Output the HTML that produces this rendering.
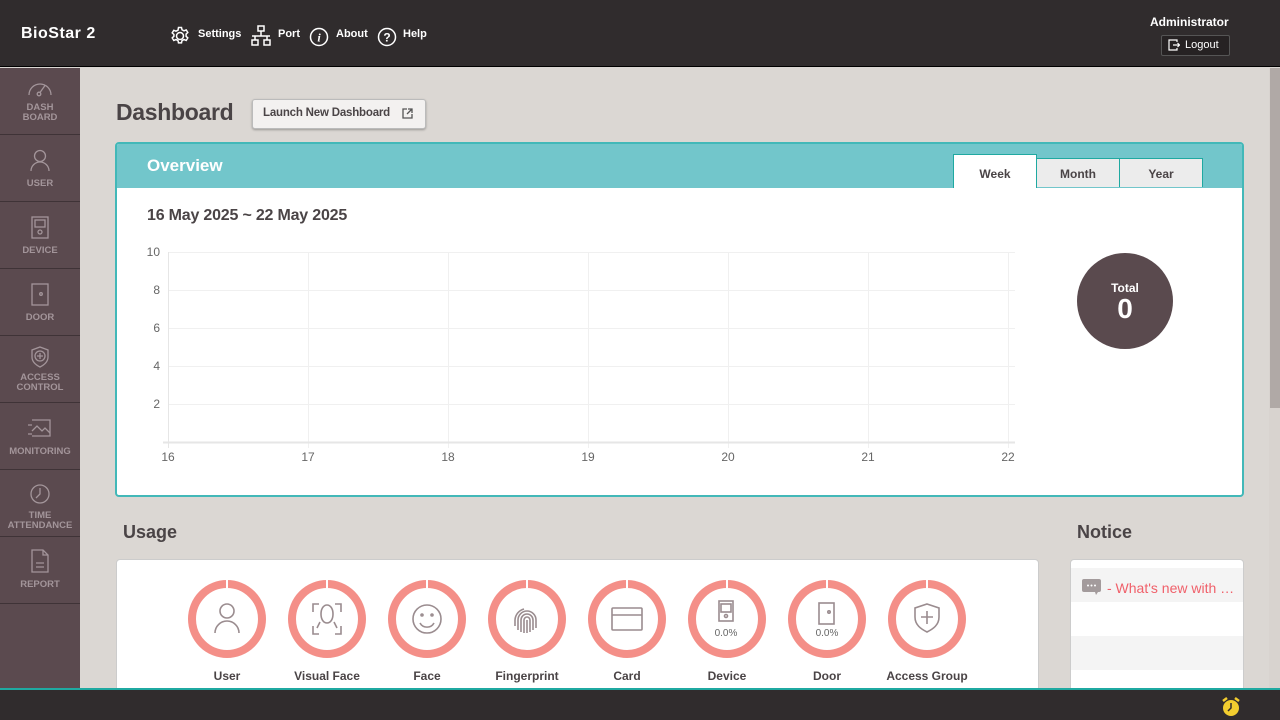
<!DOCTYPE html>
<html><head><meta charset="utf-8"><style>
*{margin:0;padding:0;box-sizing:border-box}
body{width:1280px;height:720px;overflow:hidden;background:#dbd7d3;font-family:"Liberation Sans",sans-serif;position:relative}
.a{position:absolute}
.hdr{left:0;top:0;width:1280px;height:67px;background:#302c2d;border-bottom:1px solid #000}
.nav{color:#fff;font-size:11px;font-weight:bold}
.side{left:0;top:68px;width:80px;height:622px;background:#5b4a4f}
.si{position:absolute;left:0;width:80px;border-bottom:1px solid #3f3337;text-align:center;color:#a3959a;font-size:9.5px;font-weight:bold;line-height:10px}
.si svg{display:block;margin:0 auto}
.ylab{color:#666;font-size:12px;text-align:right;width:30px}
.xlab{color:#666;font-size:12px;width:30px;text-align:center}
.lbl{position:absolute;top:669px;width:120px;text-align:center;font-size:12px;font-weight:bold;color:#4a4446}
</style></head><body>
<div class="a hdr"></div>
<div class="a" style="left:21px;top:25px;color:#fff;font-size:16px;font-weight:bold;letter-spacing:.5px">BioStar 2</div>
<svg class="a" style="left:170px;top:26px" width="20" height="20" viewBox="0 0 20 20" fill="none" stroke="#fff" stroke-width="1.5"><circle cx="10" cy="10" r="3.5"/><path d="M8.5 1.5h3l.5 2.3 2 1 2.2-.9 1.6 2.6-1.7 1.6v2.2l1.7 1.6-1.6 2.6-2.2-.9-2 1-.5 2.3h-3l-.5-2.3-2-1-2.2.9-1.6-2.6 1.7-1.6V8.5L2.2 6.9l1.6-2.6 2.2.9 2-1z"/></svg>
<div class="a nav" style="left:198px;top:28px">Settings</div>
<svg class="a" style="left:251px;top:25px" width="20" height="22" viewBox="0 0 20 22" fill="none" stroke="#fff" stroke-width="1.5"><rect x="7" y="1" width="6" height="5"/><rect x="1" y="15" width="6" height="5"/><rect x="13" y="15" width="6" height="5"/><path d="M10 6v5M1 11h18M4 11v4M16 11v4"/></svg>
<div class="a nav" style="left:278px;top:28px">Port</div>
<svg class="a" style="left:309px;top:27px" width="20" height="20" viewBox="0 0 20 20" fill="none" stroke="#fff" stroke-width="1.5"><circle cx="10" cy="10" r="8.5"/><text x="10" y="14.5" fill="#fff" stroke="none" font-size="12" font-style="italic" font-weight="bold" text-anchor="middle" font-family="Liberation Serif">i</text></svg>
<div class="a nav" style="left:336px;top:28px">About</div>
<svg class="a" style="left:377px;top:27px" width="20" height="20" viewBox="0 0 20 20" fill="none" stroke="#fff" stroke-width="1.5"><circle cx="10" cy="10" r="8.5"/><text x="10" y="14.5" fill="#fff" stroke="none" font-size="12" font-weight="bold" text-anchor="middle">?</text></svg>
<div class="a nav" style="left:403px;top:28px">Help</div>
<div class="a" style="left:1150px;top:15px;color:#fff;font-size:12px;font-weight:bold">Administrator</div>
<div class="a" style="left:1161px;top:35px;width:69px;height:21px;border:1px solid #555;background:#262223;border-radius:2px"></div>
<svg class="a" style="left:1168px;top:39px" width="12" height="12" viewBox="0 0 12 12" fill="none" stroke="#fff" stroke-width="1.2"><path d="M9 3V1H1v10h8V9M5 6h6.5M9.5 4l2 2-2 2"/></svg>
<div class="a" style="left:1185px;top:39px;color:#fff;font-size:11px">Logout</div>

<div class="a side"></div>
<div class="si" style="top:68px;height:67px;padding-top:12px"><svg width="28" height="18" viewBox="0 0 28 18" fill="none" stroke="#a3959a" stroke-width="1.3"><path d="M3 15A11 11 0 0 1 25 15"/><circle cx="13" cy="14" r="1.8"/><path d="M14 12.5l5-7"/></svg><div style="margin-top:5px">DASH<br>BOARD</div></div>
<div class="si" style="top:135px;height:67px;padding-top:14px"><svg width="22" height="24" viewBox="0 0 22 24" fill="none" stroke="#a3959a" stroke-width="1.3"><circle cx="11" cy="7" r="5.5"/><path d="M2 22a9 9 0 0 1 18 0"/></svg><div style="margin-top:6px">USER</div></div>
<div class="si" style="top:202px;height:67px;padding-top:14px"><svg width="22" height="24" viewBox="0 0 22 24" fill="none" stroke="#a3959a" stroke-width="1.3"><rect x="3" y="1" width="16" height="21"/><rect x="6" y="4" width="10" height="7"/><circle cx="11" cy="16" r="2"/></svg><div style="margin-top:6px">DEVICE</div></div>
<div class="si" style="top:269px;height:67px;padding-top:14px"><svg width="22" height="24" viewBox="0 0 22 24" fill="none" stroke="#a3959a" stroke-width="1.3"><rect x="3" y="1" width="16" height="21"/><circle cx="12" cy="11" r="1.3"/></svg><div style="margin-top:6px">DOOR</div></div>
<div class="si" style="top:336px;height:67px;padding-top:9px"><svg width="22" height="24" viewBox="0 0 22 24" fill="none" stroke="#a3959a" stroke-width="1.3"><path d="M11 2l8 3v7c0 5-4 8-8 10-4-2-8-5-8-10V5z"/><circle cx="11" cy="11" r="5"/><path d="M11 8v6M8 11h6"/></svg><div style="margin-top:4px">ACCESS<br>CONTROL</div></div>
<div class="si" style="top:403px;height:67px;padding-top:14px"><svg width="26" height="24" viewBox="0 0 26 24" fill="none" stroke="#a3959a" stroke-width="1.3"><path d="M5 3h18v16H5M1 8h4M1 17h4"/><path d="M5 14l5-5 5 5 3-3 5 5"/></svg><div style="margin-top:6px">MONITORING</div></div>
<div class="si" style="top:470px;height:67px;padding-top:13px"><svg width="22" height="24" viewBox="0 0 22 24" fill="none" stroke="#a3959a" stroke-width="1.3"><circle cx="11" cy="11" r="9"/><path d="M11 5v6l-4 4"/></svg><div style="margin-top:4px">TIME<br>ATTENDANCE</div></div>
<div class="si" style="top:537px;height:67px;padding-top:12px"><svg width="22" height="24" viewBox="0 0 22 24" fill="none" stroke="#a3959a" stroke-width="1.3"><path d="M3 1h11l5 5v17H3z"/><path d="M14 1v5h5M7 14h8M7 18h8"/></svg><div style="margin-top:7px">REPORT</div></div>

<div class="a" style="left:1269px;top:68px;width:11px;height:622px;background:#d8d3cf"></div>
<div class="a" style="left:1270px;top:68px;width:10px;height:340px;background:#b0a9a6"></div>

<div class="a" style="left:116px;top:99px;font-size:23px;font-weight:bold;color:#4a4446;letter-spacing:-.3px">Dashboard</div>
<div class="a" style="left:252px;top:99px;width:174px;height:30px;background:#f3f1f0;border:1px solid #bbb;border-radius:3px;box-shadow:0 1px 2px rgba(0,0,0,.3)"></div>
<div class="a" style="left:263px;top:107px;font-size:11.5px;font-weight:bold;color:#4a4446;letter-spacing:-.2px">Launch New Dashboard</div>
<svg class="a" style="left:402px;top:108px" width="11" height="11" viewBox="0 0 11 11" fill="none" stroke="#555" stroke-width="1.3"><path d="M5 1H1v9h9V6M6 1h4v4M10 1L5 6"/></svg>

<div class="a" style="left:115px;top:142px;width:1129px;height:355px;background:#fff;border:2px solid #42b8b8;border-radius:4px;overflow:hidden">
<div style="height:44px;background:#72c6cb"></div></div>
<div class="a" style="left:147px;top:156px;color:#fff;font-size:17px;font-weight:bold">Overview</div>
<div class="a" style="left:953px;top:154px;width:84px;height:34px;background:#fff;border:1px solid #1fa9a1;border-bottom:none;font-size:12px;font-weight:bold;color:#4a4446;text-align:center;line-height:38px">Week</div>
<div class="a" style="left:1037px;top:158px;width:83px;height:29px;background:#ececec;border:1px solid #1fa9a1;border-left:none;border-bottom:none;font-size:12px;font-weight:bold;color:#4a4446;text-align:center;line-height:30px">Month</div>
<div class="a" style="left:1119px;top:158px;width:84px;height:29px;background:#ececec;border:1px solid #1fa9a1;border-bottom:none;font-size:12px;font-weight:bold;color:#4a4446;text-align:center;line-height:30px">Year</div>
<div class="a" style="left:147px;top:207px;font-size:16px;font-weight:bold;color:#4a4446;letter-spacing:-.2px">16 May 2025 ~ 22 May 2025</div>

<svg class="a" style="left:0;top:0" width="1280" height="720">
<g stroke="#f0f0f0" stroke-width="1">
<line x1="168" y1="252.5" x2="1015" y2="252.5"/><line x1="168" y1="290.5" x2="1015" y2="290.5"/><line x1="168" y1="328.5" x2="1015" y2="328.5"/><line x1="168" y1="366.5" x2="1015" y2="366.5"/><line x1="168" y1="404.5" x2="1015" y2="404.5"/>
<line x1="308.5" y1="252" x2="308.5" y2="448"/><line x1="448.5" y1="252" x2="448.5" y2="448"/><line x1="588.5" y1="252" x2="588.5" y2="448"/><line x1="728.5" y1="252" x2="728.5" y2="448"/><line x1="868.5" y1="252" x2="868.5" y2="448"/><line x1="1008.5" y1="252" x2="1008.5" y2="448"/>
</g>
<line x1="163" y1="442.5" x2="1015" y2="442.5" stroke="#e6e6e6" stroke-width="2"/>
<line x1="168.5" y1="252" x2="168.5" y2="448" stroke="#e6e6e6"/>
<circle cx="1125" cy="301" r="48" fill="#5a4a4e"/>
</svg>
<div class="a ylab" style="left:130px;top:245px">10</div>
<div class="a ylab" style="left:130px;top:283px">8</div>
<div class="a ylab" style="left:130px;top:321px">6</div>
<div class="a ylab" style="left:130px;top:359px">4</div>
<div class="a ylab" style="left:130px;top:397px">2</div>
<div class="a xlab" style="left:153px;top:450px">16</div>
<div class="a xlab" style="left:293px;top:450px">17</div>
<div class="a xlab" style="left:433px;top:450px">18</div>
<div class="a xlab" style="left:573px;top:450px">19</div>
<div class="a xlab" style="left:713px;top:450px">20</div>
<div class="a xlab" style="left:853px;top:450px">21</div>
<div class="a xlab" style="left:993px;top:450px">22</div>
<div class="a" style="left:1085px;top:281px;width:80px;text-align:center;color:#fff;font-size:12px;font-weight:bold">Total</div>
<div class="a" style="left:1085px;top:293px;width:80px;text-align:center;color:#fff;font-size:28px;font-weight:bold">0</div>

<div class="a" style="left:123px;top:522px;font-size:18px;font-weight:bold;color:#4a4446">Usage</div>
<div class="a" style="left:1077px;top:522px;font-size:18px;font-weight:bold;color:#4a4446">Notice</div>
<div class="a" style="left:116px;top:559px;width:923px;height:140px;background:#fff;border:1px solid #ccc;border-radius:4px"></div>
<div class="a" style="left:1070px;top:559px;width:174px;height:140px;background:#fff;border:1px solid #ccc;border-radius:4px;overflow:hidden">
<div style="height:8px"></div><div style="height:34px;background:#f4f4f4"></div><div style="height:34px"></div><div style="height:34px;background:#f4f4f4"></div></div>
<svg class="a" style="left:1082px;top:579px" width="19" height="17" viewBox="0 0 19 17"><rect x="0" y="0" width="19" height="13" rx="2" fill="#a39b9c"/><path d="M13 13l1 3 2-3z" fill="#a39b9c"/><circle cx="6" cy="6.5" r="1" fill="#fff"/><circle cx="9.5" cy="6.5" r="1" fill="#fff"/><circle cx="13" cy="6.5" r="1" fill="#fff"/></svg>
<div class="a" style="left:1107px;top:580px;font-size:14px;color:#f0606a;white-space:nowrap">- What's new with …</div>

<svg class="a" style="left:0;top:0" width="1280" height="720">
<defs><g id="r"><circle r="35" fill="none" stroke="#f48f88" stroke-width="8"/><rect x="-1" y="-40" width="2" height="9" fill="#fff" stroke="none"/></g></defs>
<use href="#r" x="227" y="619"/><use href="#r" x="327" y="619"/><use href="#r" x="427" y="619"/><use href="#r" x="527" y="619"/><use href="#r" x="627" y="619"/><use href="#r" x="727" y="619"/><use href="#r" x="827" y="619"/><use href="#r" x="927" y="619"/>
<g fill="none" stroke="#9a8c8f" stroke-width="1.6">
<circle cx="227" cy="611" r="7"/><path d="M215 633a12 12 0 0 1 24 0"/>
<path d="M313 612v-8h6M335 604h6v8M313 626v8h6M335 634h6v-8"/><path d="M321 614c0-6 3-9 6-9s6 3 6 9-3 9-6 9-6-3-6-9zM320 622l-3 6M334 622l3 6"/>
<circle cx="427" cy="619" r="14"/><circle cx="422" cy="615" r="1"/><circle cx="432" cy="615" r="1"/><path d="M420 623a8 8 0 0 0 14 0"/>
<path d="M518 630v-10a9 9 0 0 1 18 0v8M521 632v-12a6 6 0 0 1 12 0v10M524 633v-13a3 3 0 0 1 6 0v12M527 620v13M515 626v-6a12 12 0 0 1 9-11"/>
<rect x="612" y="608" width="30" height="22" rx="1"/><path d="M612 615h30"/>
<rect x="719" y="601" width="14" height="20"/><rect x="721" y="604" width="10" height="8"/><circle cx="726" cy="616" r="1.5"/>
<rect x="819" y="603" width="15" height="21"/><circle cx="829" cy="612" r="1.2"/>
<path d="M927 604l12 4v9c0 8-6 12-12 15-6-3-12-7-12-15v-9z"/><path d="M927 611v13M921 617h12"/>
</g>
<text x="726" y="636" font-size="10" fill="#666" text-anchor="middle" font-family="Liberation Sans">0.0%</text>
<text x="827" y="636" font-size="10" fill="#666" text-anchor="middle" font-family="Liberation Sans">0.0%</text>
</svg>
<div class="lbl" style="left:167px">User</div>
<div class="lbl" style="left:267px">Visual Face</div>
<div class="lbl" style="left:367px">Face</div>
<div class="lbl" style="left:467px">Fingerprint</div>
<div class="lbl" style="left:567px">Card</div>
<div class="lbl" style="left:667px">Device</div>
<div class="lbl" style="left:767px">Door</div>
<div class="lbl" style="left:867px">Access Group</div>

<div class="a" style="left:0;top:688px;width:1280px;height:2px;background:#1fa9a1"></div>
<div class="a" style="left:0;top:690px;width:1280px;height:30px;background:#302c2d"></div>
<svg class="a" style="left:1220px;top:696px" width="22" height="22" viewBox="0 0 22 22"><circle cx="11" cy="12" r="8" fill="#f2cd2f"/><path d="M3 5l4-3M19 5l-4-3" stroke="#f2cd2f" stroke-width="2.5"/><path d="M11 7v5l-3 3" stroke="#302c2d" stroke-width="1.5" fill="none"/></svg>
</body></html>
